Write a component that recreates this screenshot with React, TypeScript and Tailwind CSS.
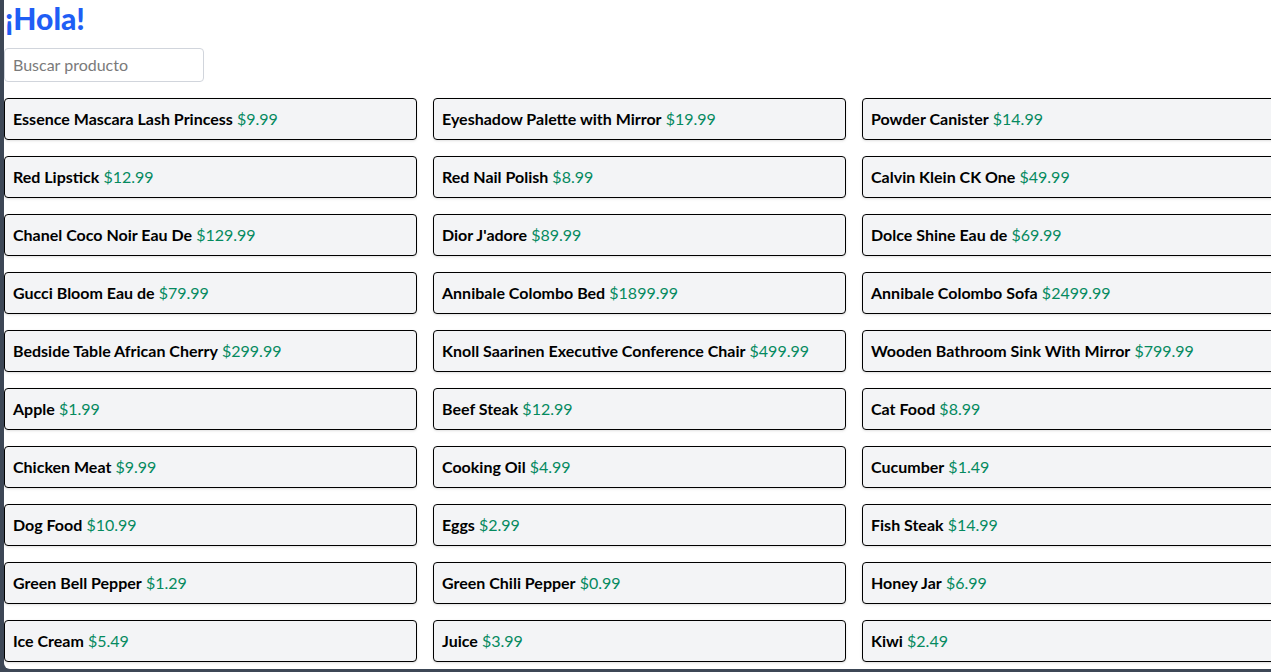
import React, { useState } from 'react';

interface Product {
  id: number;
  title: string;
  price: number;
}

const PRODUCTS: Product[] = [
  { id: 1, title: 'Essence Mascara Lash Princess', price: 9.99 },
  { id: 2, title: 'Eyeshadow Palette with Mirror', price: 19.99 },
  { id: 3, title: 'Powder Canister', price: 14.99 },
  { id: 4, title: 'Red Lipstick', price: 12.99 },
  { id: 5, title: 'Red Nail Polish', price: 8.99 },
  { id: 6, title: 'Calvin Klein CK One', price: 49.99 },
  { id: 7, title: 'Chanel Coco Noir Eau De', price: 129.99 },
  { id: 8, title: "Dior J'adore", price: 89.99 },
  { id: 9, title: 'Dolce Shine Eau de', price: 69.99 },
  { id: 10, title: 'Gucci Bloom Eau de', price: 79.99 },
  { id: 11, title: 'Annibale Colombo Bed', price: 1899.99 },
  { id: 12, title: 'Annibale Colombo Sofa', price: 2499.99 },
  { id: 13, title: 'Bedside Table African Cherry', price: 299.99 },
  { id: 14, title: 'Knoll Saarinen Executive Conference Chair', price: 499.99 },
  { id: 15, title: 'Wooden Bathroom Sink With Mirror', price: 799.99 },
  { id: 16, title: 'Apple', price: 1.99 },
  { id: 17, title: 'Beef Steak', price: 12.99 },
  { id: 18, title: 'Cat Food', price: 8.99 },
  { id: 19, title: 'Chicken Meat', price: 9.99 },
  { id: 20, title: 'Cooking Oil', price: 4.99 },
  { id: 21, title: 'Cucumber', price: 1.49 },
  { id: 22, title: 'Dog Food', price: 10.99 },
  { id: 23, title: 'Eggs', price: 2.99 },
  { id: 24, title: 'Fish Steak', price: 14.99 },
  { id: 25, title: 'Green Bell Pepper', price: 1.29 },
  { id: 26, title: 'Green Chili Pepper', price: 0.99 },
  { id: 27, title: 'Honey Jar', price: 6.99 },
  { id: 28, title: 'Ice Cream', price: 5.49 },
  { id: 29, title: 'Juice', price: 3.99 },
  { id: 30, title: 'Kiwi', price: 2.49 },
];

const App: React.FC = () => {
  const [query, setQuery] = useState('');

  const filtered = PRODUCTS.filter(p => p.title.toLowerCase().includes(query.toLowerCase()));

  return (
    <div className="h-screen w-screen overflow-hidden bg-[#3d4756] font-['Lato',sans-serif]">
      <div className="ml-1 h-[669px] w-[1271px] overflow-hidden rounded-bl-md bg-white">
        <h1 className="mb-3 pl-px text-[30px] leading-9 font-black text-[#1f5ef5]">¡Hola!</h1>
        <input
          type="text"
          value={query}
          onChange={e => setQuery(e.target.value)}
          placeholder="Buscar producto"
          className="block w-[200px] rounded border border-gray-300 px-2 py-1 text-base leading-6 outline-none placeholder:text-[#7a7a7a]"
        />

        {/* Product grid */}
        <div className="mt-4 grid grid-cols-3 gap-4">
          {filtered.map(p => (
            <div key={p.id} className="rounded border border-black bg-gray-100 px-2 py-2 text-base leading-6 whitespace-nowrap shadow-sm">
              <span className="font-bold text-black">{p.title}</span>{' '}
              <span className="text-[#058a5f]">${p.price}</span>
            </div>
          ))}
        </div>
      </div>
    </div>
  );
};

export default App;
